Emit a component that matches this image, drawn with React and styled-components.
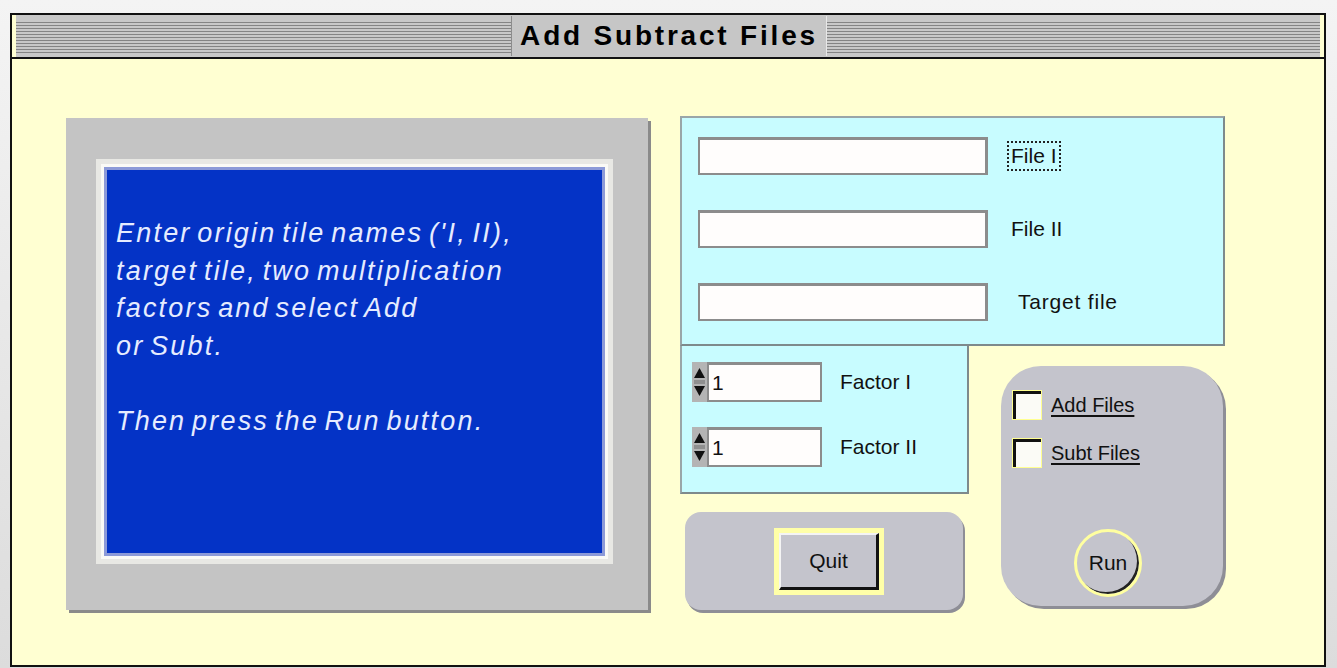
import React from 'react';
import styled, { createGlobalStyle } from 'styled-components';

const GlobalStyle = createGlobalStyle`
  html, body {
    margin: 0;
    padding: 0;
    background: #e6e6e6;
  }

  body {
    font-family: "Liberation Sans", Arial, sans-serif;
  }
`;

const Spinner = () => (
  <SpinIcon width="15" height="40" viewBox="0 0 15 40">
    <rect x="0" y="0" width="15" height="40" fill="#b4b4b4" />
    <polygon points="7.5,6 13,16 2,16" fill="#111" />
    <line x1="2" y1="19" x2="13" y2="19" stroke="#6a6a6a" strokeWidth="1" />
    <line x1="2" y1="21" x2="13" y2="21" stroke="#6a6a6a" strokeWidth="1" />
    <polygon points="2,24 13,24 7.5,34" fill="#111" />
  </SpinIcon>
);

const App = () => {
  const render = () => {
    return <>
      <GlobalStyle />
      <Page>
        <Window>
          <TitleBar>
            <TitleText>Add Subtract Files</TitleText>
          </TitleBar>

          <Content>
            <InfoPanel>
              <InfoScreen>
                <InfoText>
                  Enter origin tile names ('I, II),<br />
                  target tile, two multiplication<br />
                  factors and select Add<br />
                  or Subt.<br />
                  <br />
                  Then press the Run button.
                </InfoText>
              </InfoScreen>
            </InfoPanel>

            <RightColumn>
              <FilePanel>
                <FileRow>
                  <TextField />
                  <FieldLabel focused>File I</FieldLabel>
                </FileRow>
                <FileRow>
                  <TextField />
                  <FieldLabel>File II</FieldLabel>
                </FileRow>
                <FileRow>
                  <TextField />
                  <FieldLabel indent>Target file</FieldLabel>
                </FileRow>
              </FilePanel>

              <LowerRow>
                <LowerLeft>
                  <FactorPanel>
                    <FactorRow>
                      <Spinner />
                      <NumberField>1</NumberField>
                      <FactorLabel>Factor I</FactorLabel>
                    </FactorRow>
                    <FactorRow>
                      <Spinner />
                      <NumberField>1</NumberField>
                      <FactorLabel>Factor II</FactorLabel>
                    </FactorRow>
                  </FactorPanel>

                  <QuitPanel>
                    <FocusRing>
                      <PushButton>Quit</PushButton>
                    </FocusRing>
                  </QuitPanel>
                </LowerLeft>

                <ActionPanel>
                  <CheckRow>
                    <CheckBox />
                    <CheckLabel>Add Files</CheckLabel>
                  </CheckRow>
                  <CheckRow>
                    <CheckBox />
                    <CheckLabel>Subt Files</CheckLabel>
                  </CheckRow>
                  <RunButton>Run</RunButton>
                </ActionPanel>
              </LowerRow>
            </RightColumn>
          </Content>
        </Window>
      </Page>
    </>
  }

  return render();
}

export default App;

const Page = styled.div`
  width: 1337px;
  height: 668px;
  padding: 13px 11px 1px 10px;
  box-sizing: border-box;
  background: linear-gradient(#f4f4f4, #dcdcdc);
  overflow: hidden;
`;

const Window = styled.div`
  display: flex;
  flex-direction: column;

  height: 100%;
  box-sizing: border-box;

  border: 2px solid #111;
  background: #ffffd2;
`;

const TitleBar = styled.div`
  display: flex;
  justify-content: center;
  align-items: center;

  height: 42px;
  padding: 0 4px;

  border-bottom: 2px solid #111;
  background:
    repeating-linear-gradient(
      to bottom,
      #c8c8c8 0px,
      #c8c8c8 2px,
      #848484 2px,
      #848484 3px
    ) 0 5px / 100% 33px no-repeat,
    #c8c8c8;
  background-origin: content-box;
  background-clip: content-box;
`;

const TitleText = styled.div`
  display: flex;
  align-items: center;

  height: 40px;
  padding: 0 8px 0 8px;
  margin-left: 2px;

  border-left: 1px solid #8c8c8c;
  border-right: 1px solid #e8e8e8;
  background: #c6c6c6;
  color: #000;
  font-size: 28px;
  font-weight: bold;
  letter-spacing: 2.8px;
`;

const Content = styled.div`
  display: flex;
  flex-direction: row;
  align-items: flex-start;

  padding: 57px 0 0 54px;
`;

const InfoPanel = styled.div`
  display: flex;

  width: 582px;
  height: 492px;
  margin-top: 2px;
  box-sizing: border-box;
  padding: 46px 40px 51px 35px;

  background: #c4c4c4;
  box-shadow: 3px 3px 0 #8a8a8a;
`;

const InfoScreen = styled.div`
  flex: 1;

  border: 3px solid #fafaf6;
  outline: 5px solid #e8e8e4;
  box-shadow: inset 0 0 0 3px #8c9ad8;
  background: #0433c6;
`;

const InfoText = styled.div`
  padding: 48px 0 0 12px;

  color: #e6ecff;
  font-size: 27px;
  font-style: italic;
  line-height: 37.5px;
  letter-spacing: 2.2px;
  word-spacing: -4px;
`;

const RightColumn = styled.div`
  display: flex;
  flex-direction: column;

  margin-left: 32px;
`;

const FilePanel = styled.div`
  display: flex;
  flex-direction: column;
  gap: 35px;

  width: 545px;
  height: 230px;
  box-sizing: border-box;
  padding: 19px 0 0 16px;

  border: 2px solid #9aa6a8;
  border-right-color: #7e8a8c;
  border-bottom-color: #7e8a8c;
  background: #c8fcff;
`;

const FileRow = styled.div`
  display: flex;
  align-items: center;
`;

const TextField = styled.div`
  width: 290px;
  height: 38px;
  box-sizing: border-box;

  border: 2px solid #8c8c8c;
  border-top-width: 3px;
  border-right-width: 3px;
  background: #fffdfc;
`;

const FieldLabel = styled.div`
  margin-left: ${p => (p.indent ? '26px' : '19px')};
  padding: 1px 2px;

  border: 2px dotted ${p => (p.focused ? '#222' : 'transparent')};
  color: #111;
  font-size: 21px;
  letter-spacing: ${p => (p.indent ? '0.8px' : '0')};
`;

const LowerRow = styled.div`
  display: flex;
  flex-direction: row;
  align-items: flex-start;
`;

const LowerLeft = styled.div`
  display: flex;
  flex-direction: column;
`;

const FactorPanel = styled.div`
  display: flex;
  flex-direction: column;
  gap: 25px;

  width: 289px;
  height: 148px;
  box-sizing: border-box;
  padding: 16px 0 0 10px;

  border: 2px solid #9aa6a8;
  border-top: none;
  border-right-color: #7e8a8c;
  border-bottom-color: #7e8a8c;
  background: #c8fcff;
`;

const FactorRow = styled.div`
  display: flex;
  align-items: center;
`;

const SpinIcon = styled.svg`
  display: block;
  flex: none;
`;

const NumberField = styled.div`
  display: flex;
  align-items: center;

  width: 115px;
  height: 40px;
  box-sizing: border-box;
  padding-left: 3px;

  border: 2px solid #8c8c8c;
  border-top-width: 3px;
  background: #fffdfc;
  color: #111;
  font-size: 21px;
`;

const FactorLabel = styled.div`
  margin-left: 18px;

  color: #111;
  font-size: 21px;
`;

const QuitPanel = styled.div`
  display: flex;
  justify-content: center;
  align-items: center;

  width: 278px;
  height: 98px;
  margin: 18px 0 0 5px;
  box-sizing: border-box;
  padding-left: 10px;

  border-radius: 16px;
  background: #c4c4cc;
  box-shadow: 2px 3px 0 #8e8e96;
`;

const FocusRing = styled.div`
  padding: 5px;
  background: #ffffa8;
`;

const PushButton = styled.div`
  display: flex;
  justify-content: center;
  align-items: center;

  width: 100px;
  height: 57px;
  box-sizing: border-box;

  border-top: 2px solid #f4f4f4;
  border-left: 2px solid #f4f4f4;
  border-right: 3px solid #111;
  border-bottom: 3px solid #111;
  background: #c4c4cc;
  color: #111;
  font-size: 21px;
`;

const ActionPanel = styled.div`
  display: flex;
  flex-direction: column;
  align-items: flex-start;
  gap: 20px;

  width: 222px;
  height: 240px;
  margin: 20px 0 0 32px;
  box-sizing: border-box;
  padding: 25px 0 0 12px;

  border-radius: 40px;
  background: #c4c4cc;
  box-shadow: 3px 3px 0 #8e8e96;
`;

const CheckRow = styled.div`
  display: flex;
  align-items: center;
`;

const CheckBox = styled.div`
  width: 28px;
  height: 28px;
  box-sizing: border-box;

  border-top: 3px solid #111;
  border-left: 3px solid #111;
  outline: 1px solid #ffff90;
  background: #fbfbf6;
`;

const CheckLabel = styled.div`
  margin-left: 10px;

  color: #111;
  font-size: 20px;
  text-decoration: underline;
  text-underline-offset: 3px;
`;

const RunButton = styled.div`
  display: flex;
  justify-content: center;
  align-items: center;

  width: 68px;
  height: 68px;
  margin: 42px 0 0 61px;
  box-sizing: border-box;

  border: 3px solid #ffffa0;
  border-radius: 50%;
  box-shadow: inset -2px -2px 0 #222;
  background: #c4c4cc;
  color: #111;
  font-size: 21px;
`;
